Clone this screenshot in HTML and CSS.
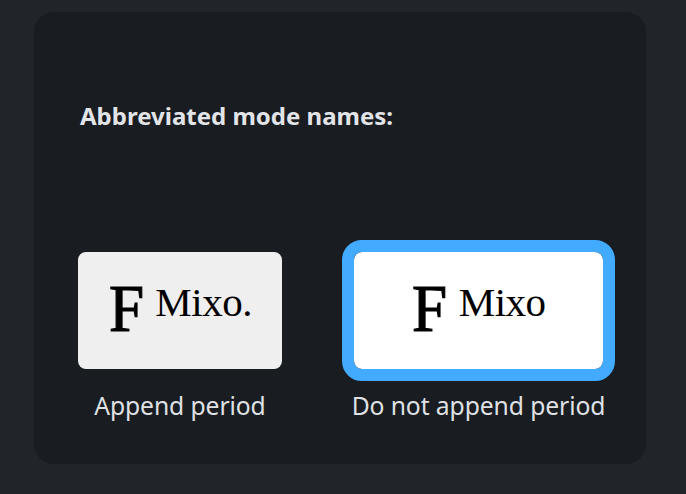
FILE: index.html
```html
<!DOCTYPE html>
<html>
<head>
<meta charset="utf-8">
<link rel="stylesheet" href="styles.css">
</head>
<body>
<div class="panel">
  <div class="heading">Abbreviated mode names:</div>
  <div class="options">
    <div class="option">
      <div class="card">
        <span class="glyphs"><span class="big">F</span><span class="sup">Mixo.</span></span>
      </div>
      <div class="label">Append period</div>
    </div>
    <div class="option">
      <div class="card selected">
        <span class="glyphs"><span class="big">F</span><span class="sup">Mixo</span></span>
      </div>
      <div class="label">Do not append period</div>
    </div>
  </div>
</div>
</body>
</html>
```
FILE: styles.css
```css
html, body {
  margin: 0;
  padding: 0;
  background: #212529;
}
body {
  width: 686px;
  height: 494px;
  overflow: hidden;
  font-family: "Noto Sans", "Open Sans", sans-serif;
}
.panel {
  box-sizing: border-box;
  margin: 12px 0 0 34px;
  width: 612px;
  height: 452px;
  border-radius: 20px;
  background: #191c20;
  padding: 88px 0 0 32px;
}
.heading {
  padding-left: 14px;
  color: #e2e4e8;
  font-weight: 700;
  font-size: 24px;
  line-height: 32px;
  letter-spacing: 0;
}
.options {
  display: flex;
  gap: 48px;
  margin-top: 108px;
}
.option {
  display: flex;
  flex-direction: column;
  align-items: center;
}
.card {
  box-sizing: border-box;
  border: 12px solid transparent;
  border-radius: 20px;
  background: #efefef;
  background-clip: padding-box;
  width: 228px;
  height: 141px;
  display: flex;
  align-items: center;
  justify-content: center;
  font-family: "Liberation Serif", "DejaVu Serif", serif;
  color: #000;
}
.card.selected {
  width: 273px;
  background-color: #fff;
  border-color: #42aaff;
}
.glyphs {
  display: block;
  line-height: 60px;
  height: 60px;
  margin-top: -6px;
  white-space: nowrap;
}
.big {
  display: inline-block;
  font-size: 67px;
  transform: scaleX(0.94);
  transform-origin: center;
  -webkit-text-stroke: 1.2px #000;
}
.sup {
  font-size: 41px;
  position: relative;
  top: -15px;
  margin-left: 10px;
  letter-spacing: -0.5px;
}
.label {
  margin-top: 9px;
  color: #dfe1e5;
  font-size: 24.7px;
  line-height: 32px;
  letter-spacing: -0.1px;
}
```
